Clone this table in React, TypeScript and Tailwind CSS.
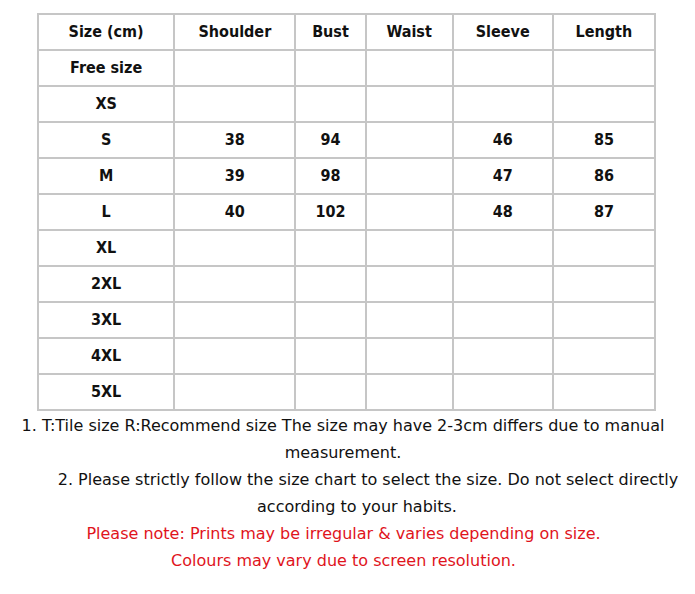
const headers = ['Size (cm)', 'Shoulder', 'Bust', 'Waist', 'Sleeve', 'Length'];

const rows: string[][] = [
  ['Free size', '', '', '', '', ''],
  ['XS', '', '', '', '', ''],
  ['S', '38', '94', '', '46', '85'],
  ['M', '39', '98', '', '47', '86'],
  ['L', '40', '102', '', '48', '87'],
  ['XL', '', '', '', '', ''],
  ['2XL', '', '', '', '', ''],
  ['3XL', '', '', '', '', ''],
  ['4XL', '', '', '', '', ''],
  ['5XL', '', '', '', '', ''],
];

const colWidths = ['w-[136px]', 'w-[121px]', 'w-[70px]', 'w-[87px]', 'w-[100px]', 'w-[102px]'];

const cellCls = 'h-[36px] border-2 border-[#c6c6c6] p-0 text-center align-middle font-bold';

export default function App() {
  return (
    <div className="w-[695px] h-[594px] bg-white pt-[13px] font-['DejaVu_Sans_Condensed','DejaVu_Sans',sans-serif] text-[16px] text-[#111]">
      <table className="ml-[37px] w-[619px] table-fixed border-collapse">
        <colgroup>
          {colWidths.map((w, i) => (
            <col key={i} className={w} />
          ))}
        </colgroup>
        <thead>
          <tr>
            {headers.map((h) => (
              <th key={h} className={cellCls}>
                {h}
              </th>
            ))}
          </tr>
        </thead>
        <tbody>
          {rows.map((r) => (
            <tr key={r[0]}>
              {r.map((c, i) => (
                <td key={i} className={cellCls}>
                  {c}
                </td>
              ))}
            </tr>
          ))}
        </tbody>
      </table>

      {/* notes under the chart */}
      <div className="mt-[1px] font-['DejaVu_Sans',sans-serif] leading-[27px]">
        <p className="pr-[9px] text-center">
          1. T:Tile size R:Recommend size The size may have 2-3cm differs due to manual
          <br />
          measurement.
        </p>
        <p className="pl-[19px] text-center indent-[22px]">
          2. Please strictly follow the size chart to select the size. Do not select directly
          <br />
          according to your habits.
        </p>
        <p className="pr-[8px] text-center text-[#e0141c]">
          Please note: Prints may be irregular &amp; varies depending on size.
          <br />
          Colours may vary due to screen resolution.
        </p>
      </div>
    </div>
  );
}
